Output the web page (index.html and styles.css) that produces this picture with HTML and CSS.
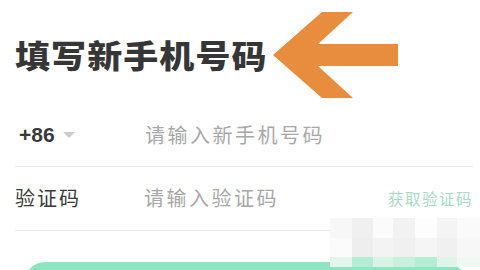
FILE: index.html
```html
<!DOCTYPE html>
<html lang="zh-CN">
<head>
<meta charset="utf-8">
<link rel="stylesheet" href="styles.css">
</head>
<body>
<div class="page">
  <div class="header">
    <h1 class="title">填写新手机号码</h1>
    <svg class="arrow" width="128" height="88" viewBox="0 0 128 88">
      <polygon points="1,43 50,0 81,0 46,32 126,32 126,54 46,54 81,86 50,86" fill="#e88c3e"/>
    </svg>
  </div>
  <div class="form">
    <div class="row">
      <div class="code">+86<span class="tri"></span></div>
      <div class="ph">请输入新手机号码</div>
    </div>
    <div class="row row2">
      <div class="label">验证码</div>
      <div class="ph">请输入验证码</div>
      <div class="get">获取验证码</div>
    </div>
  </div>
  <div class="btn"></div>
  <div class="mosaic">
    <i style="background:#f7f7f7"></i><i style="background:#f0f0f0"></i><i style="background:#fbfbfb"></i><i style="background:#f2f2f2"></i><i style="background:#fdfdfd"></i><i style="background:#f4f4f4"></i><i style="background:#fafafa"></i>
    <i style="background:#fbfbfb"></i><i style="background:#eeeeee"></i><i style="background:#f3f3f3"></i><i style="background:#f0f0f0"></i><i style="background:#f5f5f5"></i><i style="background:#f0f0f0"></i><i style="background:#f7f7f7"></i>
    <i style="background:#e3f6ee"></i><i style="background:#b5ecd5"></i><i style="background:#d8f3e7"></i><i style="background:#c8f0de"></i><i style="background:#b6ecd4"></i><i style="background:#dff5ec"></i><i style="background:#f0f8f4"></i>
  </div>
</div>
</body>
</html>
```
FILE: styles.css
```css
html, body {
  margin: 0;
  padding: 0;
  background: #fff;
}
.page {
  position: relative;
  width: 480px;
  height: 270px;
  overflow: hidden;
  font-family: "Noto Sans CJK SC", "Noto Sans", sans-serif;
}
.header {
  display: flex;
  align-items: center;
  height: 103px;
  padding-left: 15px;
  padding-top: 8px;
  box-sizing: border-box;
}
.title {
  margin: 0;
  font-size: 31.5px;
  font-weight: 900;
  letter-spacing: 1px;
  color: #363636;
  line-height: 40px;
  width: 257px;
  white-space: nowrap;
  transform: scaleX(1.11);
  transform-origin: left center;
  position: relative;
  top: -2px;
}
.arrow {
  display: block;
}
.form {
  padding-left: 15px;
  padding-right: 7px;
}
.row {
  display: flex;
  align-items: center;
  height: 64px;
  border-bottom: 1px solid #ececec;
  box-sizing: border-box;
}
.row2 {
  height: 64px;
  padding-bottom: 2px;
}
.code {
  width: 130px;
  display: flex;
  align-items: center;
  padding-left: 4px;
  box-sizing: border-box;
  font-family: "Liberation Sans", Arial, sans-serif;
  font-size: 21px;
  font-weight: 700;
  color: #3a3a3a;
}
.tri {
  width: 0;
  height: 0;
  margin-left: 8px;
  border-left: 6px solid transparent;
  border-right: 6px solid transparent;
  border-top: 6px solid #cccccc;
}
.label {
  width: 129px;
  font-size: 20px;
  letter-spacing: 2px;
  color: #3a3a3a;
}
.ph {
  font-size: 20px;
  letter-spacing: 2.5px;
  color: #a8a8a8;
  flex: 1;
}
.get {
  font-size: 15.5px;
  letter-spacing: 1.5px;
  color: #a6dcc5;
}
.btn {
  margin: 31px 15px 0 25px;
  height: 40px;
  border-radius: 20px;
  background: #8fe5c2;
}
.mosaic {
  position: absolute;
  left: 330px;
  top: 218px;
  width: 150px;
  display: grid;
  grid-template-columns: 22px 21px 20px 22px 22px 20px 23px;
  grid-template-rows: 20px 19px 10px;
}
.mosaic i {
  display: block;
}
```
